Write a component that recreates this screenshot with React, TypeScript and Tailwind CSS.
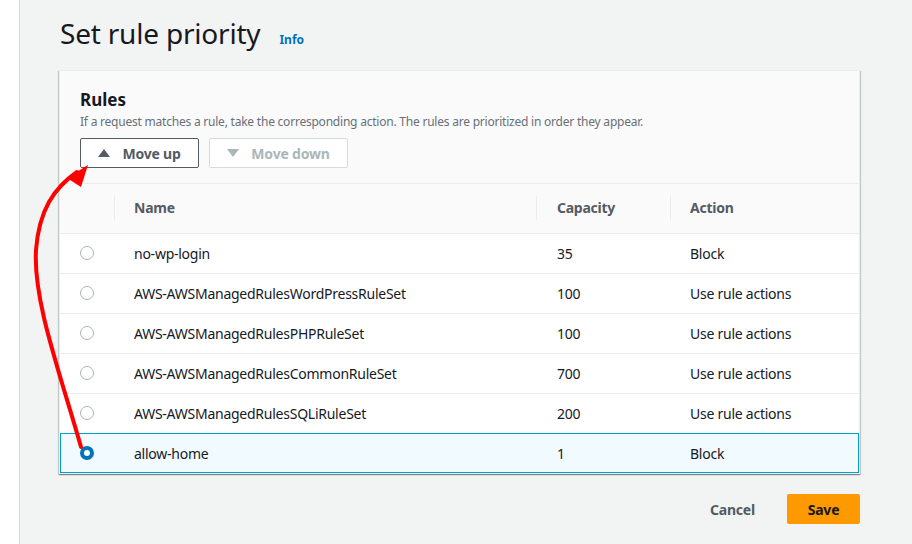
import React from 'react';

type Rule = { name: string; capacity: number; action: string };

const rules: Rule[] = [
  { name: 'no-wp-login', capacity: 35, action: 'Block' },
  { name: 'AWS-AWSManagedRulesWordPressRuleSet', capacity: 100, action: 'Use rule actions' },
  { name: 'AWS-AWSManagedRulesPHPRuleSet', capacity: 100, action: 'Use rule actions' },
  { name: 'AWS-AWSManagedRulesCommonRuleSet', capacity: 700, action: 'Use rule actions' },
  { name: 'AWS-AWSManagedRulesSQLiRuleSet', capacity: 200, action: 'Use rule actions' },
  { name: 'allow-home', capacity: 1, action: 'Block' },
];

function Radio({ checked }: { checked: boolean }) {
  if (checked) {
    return <span className="block w-[14px] h-[14px] rounded-full border-[4px] border-[#0073bb] bg-white" />;
  }
  return <span className="block w-[14px] h-[14px] rounded-full border border-[#aab7b8] bg-white" />;
}

function Caret({ down, color }: { down?: boolean; color: string }) {
  return (
    <svg width="12" height="9" viewBox="0 0 12 9">
      <polygon points={down ? '0,0 12,0 6,8' : '0,8 12,8 6,0'} fill={color} />
    </svg>
  );
}

export default function App() {
  const selected = rules.length - 1;

  return (
    <div
      className="w-[912px] h-[544px] overflow-hidden flex bg-white text-[#16191f]"
      style={{ fontFamily: '"Noto Sans", "Open Sans", Arial, sans-serif' }}
    >
      <div className="w-[20px] shrink-0 bg-white border-r border-[#d5dbdb]" />
      <div className="relative flex-1 bg-[#f2f3f3] pl-[39px] pr-[52px]">
        <div className="flex items-baseline h-[70px] pt-[13px]">
          <h1 className="text-[28px] leading-[40px] font-normal tracking-[-0.2px] pl-[1px]">Set rule priority</h1>
          <a className="ml-[19px] text-[12px] font-bold text-[#0073bb]">Info</a>
        </div>

        <div className="bg-white border border-[#eaeded] shadow-[0_1px_1px_0_rgba(0,28,36,0.3),1px_1px_1px_0_rgba(0,28,36,0.15),-1px_1px_1px_0_rgba(0,28,36,0.15)]">
          <div className="bg-[#fafafa] border-b border-[#eaeded] px-[20px] pt-[18px] pb-[15px]">
            <h2 className="text-[17px] leading-[22px] font-bold">Rules</h2>
            <p className="text-[12px] leading-[18px] text-[#687078] mt-[2px] tracking-[-0.22px]">
              If a request matches a rule, take the corresponding action. The rules are prioritized in order they appear.
            </p>
            <div className="flex gap-[10px] mt-[7px] tracking-[-0.2px]">
              <button className="h-[30px] w-[119px] flex items-center justify-center gap-[12px] bg-white border border-[#545b64] rounded-[2px] text-[14px] font-bold text-[#545b64]">
                <Caret color="#545b64" />
                <span>Move up</span>
              </button>
              <button className="h-[30px] w-[139px] flex items-center justify-center gap-[12px] bg-white border border-[#d5dbdb] rounded-[2px] text-[14px] font-bold text-[#aab7b8]">
                <Caret down color="#aab7b8" />
                <span>Move down</span>
              </button>
            </div>
          </div>

          <table className="w-full border-collapse text-[14px] tracking-[-0.25px]">
            <thead>
              <tr className="h-[49px] bg-[#fafafa] border-b border-[#eaeded] text-[#545b64]">
                <th className="w-[54px]" />
                <th className="text-left font-bold p-0">
                  <div className="border-l border-[#eaeded] pl-[19px] h-[24px] leading-[24px]">Name</div>
                </th>
                <th className="w-[134px] text-left font-bold p-0">
                  <div className="border-l border-[#eaeded] pl-[20px] h-[24px] leading-[24px]">Capacity</div>
                </th>
                <th className="w-[189px] text-left font-bold p-0">
                  <div className="border-l border-[#eaeded] pl-[19px] h-[24px] leading-[24px]">Action</div>
                </th>
              </tr>
            </thead>
            <tbody>
              {rules.map((r, i) => {
                const isSel = i === selected;
                return (
                  <tr
                    key={r.name}
                    className={
                      isSel
                        ? 'h-[40px] bg-[#f1faff] outline outline-1 outline-[#00a1c9] -outline-offset-1'
                        : 'h-[40px] border-b border-[#eaeded]'
                    }
                  >
                    <td className="pl-[20px]">
                      <Radio checked={isSel} />
                    </td>
                    <td className="pl-[20px]">{r.name}</td>
                    <td className="pl-[21px]">{r.capacity}</td>
                    <td className="pl-[20px]">{r.action}</td>
                  </tr>
                );
              })}
            </tbody>
          </table>
        </div>

        <div className="flex justify-end items-center gap-[12px] mt-[20px] tracking-[-0.2px]">
          <button className="px-[20px] h-[30px] text-[14px] font-bold text-[#545b64]">Cancel</button>
          <button className="w-[73px] h-[30px] bg-[#ff9900] rounded-[2px] text-[14px] font-bold text-[#16191f]">Save</button>
        </div>

        <svg className="absolute left-[-21px] top-0 pointer-events-none" width="912" height="544" viewBox="0 0 912 544">
          <path
            d="M82 447 C 60 370, 34 300, 37 250 C 40 210, 55 188, 78 172"
            fill="none"
            stroke="#ff0000"
            strokeWidth="4"
            strokeLinecap="round"
          />
          <polygon points="89,165 68,178 82,187" fill="#ff0000" />
        </svg>
      </div>
    </div>
  );
}
